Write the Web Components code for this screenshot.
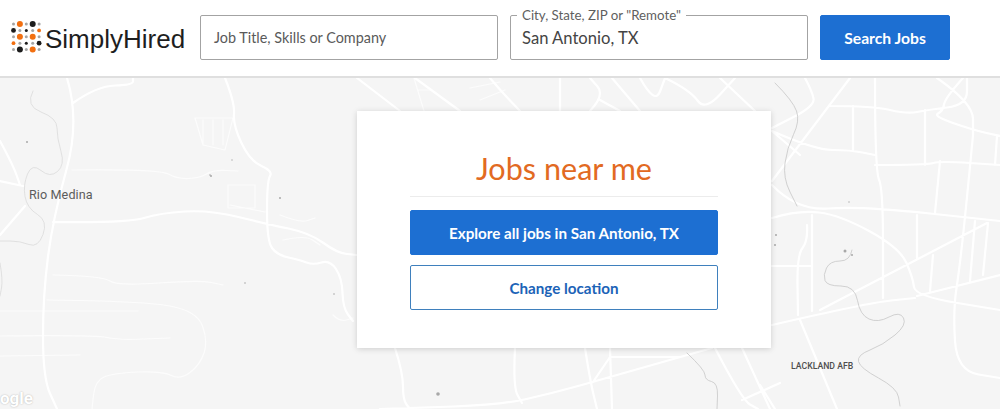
<!DOCTYPE html>
<html>
<head>
<meta charset="utf-8">
<title>Jobs near me</title>
<style>
  html, body { margin: 0; height: 100%; background: #fff; overflow: hidden; }
  body { font-family: Lato, "Noto Sans", sans-serif; }
</style>
</head>
<body>
<site-header></site-header>
<map-page>
  <location-card>
    <action-button kind="solid">Explore all jobs in San Antonio, TX</action-button>
    <action-button kind="outline">Change location</action-button>
  </location-card>
</map-page>

<script>
class BrandLogo extends HTMLElement {
    constructor(){
        super();
        this.shadowDOM = this.attachShadow({mode: 'open'});
    }

    connectedCallback(){
        // 5x5 dot matrix: g grey, k/m black small/medium, o orange, capitals are the big dots
        const rows = ['gOgKg', 'mgkgo', 'gOgOg', 'ogkgm', 'gKgOg'];
        const fill = {g: '#a6a6a6', k: '#1c1c1c', m: '#1c1c1c', K: '#1c1c1c', o: '#f26f10', O: '#f26f10'};
        const radius = {g: 1.5, k: 1.5, m: 2.4, K: 3, o: 1.9, O: 3};
        let dots = '';
        rows.forEach((row, y) => {
            [...row].forEach((c, x) => {
                dots += `<circle cx="${2.5 + x * 6.4}" cy="${3 + y * 6.4}" r="${radius[c]}" fill="${fill[c]}"/>`;
            });
        });
        this.shadowDOM.innerHTML = `
        <style>
        :host { display: flex; align-items: center; width: 189px; flex: none; }
        svg { width: 33px; height: 33px; flex: none; margin-left: 11px; }
        span {
            margin-left: 1px;
            font: 400 26px "Liberation Sans", sans-serif;
            color: #1e1e1e;
            position: relative;
            top: 2px;
        }
        </style>
        <svg viewBox="0 0 33 33">${dots}</svg>
        <span>SimplyHired</span>
        `;
    }
}

class SearchField extends HTMLElement {
    constructor(){
        super();
        this.shadowDOM = this.attachShadow({mode: 'open'});
    }

    connectedCallback(){
        const label = this.getAttribute('label');
        const value = this.getAttribute('value');
        const hint = this.getAttribute('hint');
        this.shadowDOM.innerHTML = `
        <style>
        :host {
            display: flex;
            align-items: center;
            box-sizing: border-box;
            height: 45px;
            border: 1px solid #a3a3a3;
            border-radius: 2px;
            background: #fff;
            position: relative;
            flex: none;
            width: var(--w);
        }
        .hint { margin-left: 13px; font-size: 14.4px; color: #5a5a5a; }
        .value { margin-left: 11px; font-size: 16.6px; color: #444; }
        .label {
            position: absolute;
            left: 6px;
            top: -9px;
            padding: 0 5px;
            background: #fff;
            font-size: 13.3px;
            line-height: 16px;
            color: #5f5f5f;
        }
        </style>
        ${label ? `<span class="label">${label}</span>` : ''}
        ${value ? `<span class="value">${value}</span>` : `<span class="hint">${hint}</span>`}
        `;
    }
}

class ActionButton extends HTMLElement {
    constructor(){
        super();
        this.shadowDOM = this.attachShadow({mode: 'open'});
    }

    connectedCallback(){
        this.shadowDOM.innerHTML = `
        <style>
        :host {
            display: flex;
            align-items: center;
            justify-content: center;
            box-sizing: border-box;
            height: 45px;
            border-radius: 2px;
            font-size: var(--size, 15.2px);
            font-weight: 700;
            cursor: pointer;
        }
        :host([kind="solid"]) { background: #1d6fd2; color: #fff; border: 1px solid #1d6fd2; }
        :host([kind="outline"]) { background: #fff; color: #1c63b7; border: 1px solid #3f80bd; }
        </style>
        <slot></slot>
        `;
    }
}

class SiteHeader extends HTMLElement {
    constructor(){
        super();
        this.shadowDOM = this.attachShadow({mode: 'open'});
    }

    connectedCallback(){
        this.shadowDOM.innerHTML = `
        <style>
        :host {
            display: flex;
            align-items: center;
            box-sizing: border-box;
            height: 78px;
            padding-bottom: 1px;
            background: #fff;
            border-bottom: 2px solid #dfdfdf;
        }
        .search { display: flex; align-items: center; margin-left: 11px; }
        action-button { width: 130px; margin-left: 12.5px; --size: 15.7px; }
        search-field + search-field { margin-left: 12px; }
        </style>
        <brand-logo></brand-logo>
        <div class="search">
            <search-field style="--w:298px" hint="Job Title, Skills or Company"></search-field>
            <search-field style="--w:297.5px" label='City, State, ZIP or "Remote"' value="San Antonio, TX"></search-field>
            <action-button kind="solid">Search Jobs</action-button>
        </div>
        `;
    }
}

// turns "M x y x y ..." polylines into curves through the midpoints, so roads bend softly
function smooth(d){
    if (/[HVZ]/.test(d)) return d;
    return d.split('M').filter(Boolean).map(part => {
        const n = part.trim().split(/\s+/).map(Number);
        const pts = [];
        for (let i = 0; i < n.length; i += 2) pts.push([n[i], n[i + 1]]);
        let out = `M${pts[0][0]} ${pts[0][1]}`;
        for (let i = 1; i < pts.length - 1; i++) {
            const mx = (pts[i][0] + pts[i + 1][0]) / 2;
            const my = (pts[i][1] + pts[i + 1][1]) / 2;
            out += `Q${pts[i][0]} ${pts[i][1]} ${mx} ${my}`;
        }
        const last = pts[pts.length - 1];
        return out + `L${last[0]} ${last[1]}`;
    }).join('');
}

class MapPage extends HTMLElement {
    constructor(){
        super();
        this.shadowDOM = this.attachShadow({mode: 'open'});
    }

    connectedCallback(){
        // roads are traced in page coordinates, the svg starts at y=78
        const roads = [
            'M67 78 80 121 53 218 43 295 43 378 57 409',
            'M73 103 97 86 133 85 133 78',
            'M53 222 128 223 160 213 210 210 267 224 310 233 337 253 357 255',
            'M225 78 235 103 233 125 250 161 273 171 267 181 267 241 277 255 300 260 313 265 330 260 342 278 343 308 353 321',
            'M0 141 13 165 20 185M0 181 23 186M25 206 0 235',
            'M357 78 400 111M415 78 460 111M490 78 500 90 520 111M560 78 560 111M590 111 605 95 590 78M600 100 620 111',
            'M612 78 640 111M640 78 655 105 665 78M665 78 690 90 705 111 735 78M720 78 755 111',
            'M772 181 850 78',
            'M772 185 797 211 860 206 1000 221',
            'M772 218 798 210 840 215 900 248 913 278 915 296 1000 310',
            'M772 325 867 303 915 298',
            'M1000 275 917 296',
            'M987 223 820 310',
            'M875 78 875 171 883 188 883 298',
            'M830 106 873 106 907 114 927 110 967 105 967 78',
            'M853 106 853 150',
            'M772 131 815 150 850 150 875 155',
            'M875 165 927 165 940 161 1000 165',
            'M925 110 925 165',
            'M940 161 935 213',
            'M973 135 968 188 960 265 953 311 957 371 1000 378',
            'M917 215 917 258',
            'M933 255 930 291',
            'M975 221 970 281',
            'M988 223 983 275',
            'M812 215 812 311',
            'M772 266 812 266',
            'M807 225 808 241 797 255 798 315',
            'M800 320 837 409',
            'M937 78 973 103 973 135',
            'M963 78 945 98 943 111 933 116 973 130 1000 136',
            'M805 78 812 91 815 106 772 128',
            'M772 131 800 155',
            'M997 136 995 165',
            'M712 348 607 378 553 393 500 405 407 408 380 409',
            'M395 348 403 373 403 400 410 409',
            'M515 348 513 387 522 403',
            'M585 348 590 380 597 409',
            'M610 357 593 382M610 357 680 357M610 348 612 409',
            'M715 348 742 400 758 409M742 348 770 409M742 400 780 383',
            'M760 385 775 409'
        ];
        const faint = [
            'M72 170 160 169 177 179 200 178 213 170 238 171',
            'M53 275 103 276 117 286 200 280 223 285',
            'M47 300 143 301 197 311 208 341 200 365 180 380 163 371 113 373 95 381 92 409',
            'M0 311 138 311',
            'M0 336 97 335 117 340 170 338',
            'M0 356 80 355',
            'M195 118H233L225 150 203 145ZM203 120V145M213 120V145M223 120V145',
            'M228 185H255V208H228ZM230 205 265 212',
            'M280 215 300 223 315 218M283 240 305 235 320 245',
            'M414 78 424 111M418 90 430 90',
            'M470 88 500 82M480 100 505 90',
            'M333 315 340 322 353 318'
        ];
        const rivers = [
            'M33 91 25 106 57 118 57 138 65 165 50 178 32 163 23 185 27 208 48 221 38 248 20 241 0 241',
            'M0 263 3 280 0 296'
        ];
        const darkRivers = [
            'M775 83 793 101 800 121 787 148 783 178 797 206',
            'M852 250 850 261 830 261 823 275 827 286 855 286 860 315 878 323 900 311 907 325 883 345 857 355 860 368 897 388 900 406',
            'M687 353 705 370 705 380 718 383 717 409'
        ];
        const specks = [
            [27, 142, 1], [210, 175, .8], [232, 160, .7], [211, 176, 1], [245, 283, .8], [334, 294, .8], [280, 198, 1],
            [438, 394, 1.8], [849, 202, .7], [776, 235, 1], [775, 245, 1], [845, 251, 1.5], [852, 255, 1]
        ];
        this.shadowDOM.innerHTML = `
        <style>
        :host {
            display: flex;
            align-items: flex-start;
            box-sizing: border-box;
            height: 331px;
            padding: 33px 0 0 357px;
            background: #f5f5f5;
            position: relative;
            overflow: hidden;
        }
        svg { position: absolute; left: 0; top: 0; width: 1000px; height: 331px; filter: blur(.5px); }
        svg path { fill: none; stroke-linejoin: round; stroke-linecap: round; }
        .road { stroke: #fff; stroke-width: 2.2; }
        .faint { stroke: #fcfcfc; stroke-width: 1.2; }
        .river { stroke: #dadada; stroke-width: .8; }
        .river.dark { stroke: #c6c6c6; }
        .place {
            position: absolute;
            font-family: Roboto, sans-serif;
            color: #5c5c5c;
        }
        .rio { left: 29px; top: 109px; font-size: 12.6px; letter-spacing: .1px; }
        .afb { left: 791px; top: 283px; font-size: 8.7px; font-weight: 500; color: #4e4e4e; }
        .google {
            position: absolute;
            left: 0;
            top: 310px;
            font: 700 17px/20px Roboto, sans-serif;
            color: #fff;
            text-shadow: 0 0 1.5px #aaa;
        }
        </style>
        <svg viewBox="0 78 1000 331">
            <path class="faint" d="${faint.map(smooth).join(' ')}"/>
            <path class="road" d="${roads.map(smooth).join(' ')}"/>
            <path class="river" d="${rivers.map(smooth).join(' ')}"/>
            <path class="river dark" d="${darkRivers.map(smooth).join(' ')}"/>
            ${specks.map(s => `<circle cx="${s[0]}" cy="${s[1]}" r="${s[2]}" fill="#a8a8a8"/>`).join('')}
        </svg>
        <span class="place rio">Rio Medina</span>
        <span class="place afb">LACKLAND AFB</span>
        <span class="google">ogle</span>
        <slot></slot>
        `;
    }
}

class LocationCard extends HTMLElement {
    constructor(){
        super();
        this.shadowDOM = this.attachShadow({mode: 'open'});
    }

    connectedCallback(){
        this.shadowDOM.innerHTML = `
        <style>
        :host {
            display: block;
            box-sizing: border-box;
            width: 414px;
            height: 237px;
            padding: 40px 53px 0;
            background: #fff;
            position: relative;
            box-shadow: 0 1px 6px rgba(0, 0, 0, .16);
        }
        h1 {
            margin: 0;
            height: 45px;
            line-height: 36px;
            text-align: center;
            font-size: 30.6px;
            font-weight: 400;
            color: #e26a22;
            border-bottom: 1px solid #ececec;
        }
        .actions { display: flex; flex-direction: column; gap: 10px; margin-top: 13px; }
        </style>
        <h1>Jobs near me</h1>
        <div class="actions"><slot></slot></div>
        `;
    }
}

customElements.define('brand-logo', BrandLogo);
customElements.define('search-field', SearchField);
customElements.define('action-button', ActionButton);
customElements.define('site-header', SiteHeader);
customElements.define('map-page', MapPage);
customElements.define('location-card', LocationCard);
</script>
</body>
</html>
